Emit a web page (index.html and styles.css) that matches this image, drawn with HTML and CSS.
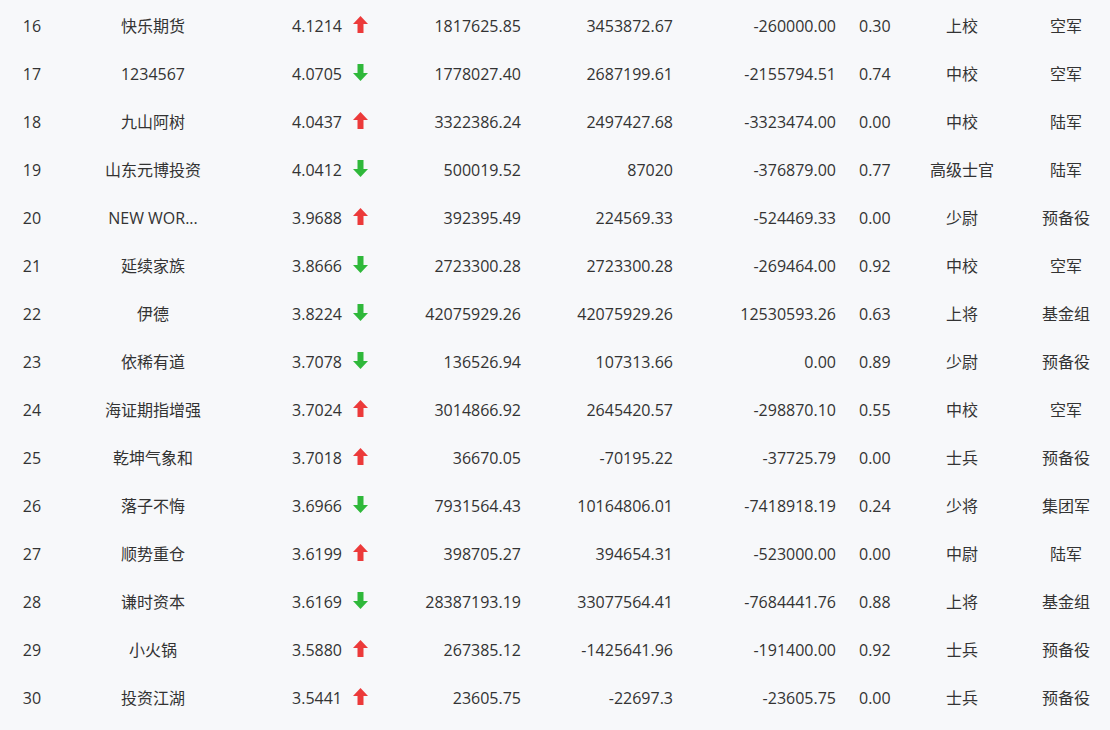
FILE: index.html
```html
<!DOCTYPE html>
<html lang="zh">
<head>
<meta charset="utf-8">
<title>排行</title>
<link rel="stylesheet" href="styles.css">
</head>
<body>
<div class="table">
  <div class="row"><span class="c rank">16</span><span class="c name">快乐期货</span><span class="c score">4.1214<svg class="arr up" viewBox="0 0 15 17"><polygon points="7.5,0 15,8 10.5,8 10.5,17 4.5,17 4.5,8 0,8"/></svg></span><span class="c n4">1817625.85</span><span class="c n5">3453872.67</span><span class="c n6">-260000.00</span><span class="c n7">0.30</span><span class="c rankt">上校</span><span class="c army">空军</span></div>
  <div class="row"><span class="c rank">17</span><span class="c name">1234567</span><span class="c score">4.0705<svg class="arr down" viewBox="0 0 15 17"><polygon points="7.5,17 15,9 10.5,9 10.5,0 4.5,0 4.5,9 0,9"/></svg></span><span class="c n4">1778027.40</span><span class="c n5">2687199.61</span><span class="c n6">-2155794.51</span><span class="c n7">0.74</span><span class="c rankt">中校</span><span class="c army">空军</span></div>
  <div class="row"><span class="c rank">18</span><span class="c name">九山阿树</span><span class="c score">4.0437<svg class="arr up" viewBox="0 0 15 17"><polygon points="7.5,0 15,8 10.5,8 10.5,17 4.5,17 4.5,8 0,8"/></svg></span><span class="c n4">3322386.24</span><span class="c n5">2497427.68</span><span class="c n6">-3323474.00</span><span class="c n7">0.00</span><span class="c rankt">中校</span><span class="c army">陆军</span></div>
  <div class="row"><span class="c rank">19</span><span class="c name">山东元博投资</span><span class="c score">4.0412<svg class="arr down" viewBox="0 0 15 17"><polygon points="7.5,17 15,9 10.5,9 10.5,0 4.5,0 4.5,9 0,9"/></svg></span><span class="c n4">500019.52</span><span class="c n5">87020</span><span class="c n6">-376879.00</span><span class="c n7">0.77</span><span class="c rankt">高级士官</span><span class="c army">陆军</span></div>
  <div class="row"><span class="c rank">20</span><span class="c name">NEW WOR...</span><span class="c score">3.9688<svg class="arr up" viewBox="0 0 15 17"><polygon points="7.5,0 15,8 10.5,8 10.5,17 4.5,17 4.5,8 0,8"/></svg></span><span class="c n4">392395.49</span><span class="c n5">224569.33</span><span class="c n6">-524469.33</span><span class="c n7">0.00</span><span class="c rankt">少尉</span><span class="c army">预备役</span></div>
  <div class="row"><span class="c rank">21</span><span class="c name">延续家族</span><span class="c score">3.8666<svg class="arr down" viewBox="0 0 15 17"><polygon points="7.5,17 15,9 10.5,9 10.5,0 4.5,0 4.5,9 0,9"/></svg></span><span class="c n4">2723300.28</span><span class="c n5">2723300.28</span><span class="c n6">-269464.00</span><span class="c n7">0.92</span><span class="c rankt">中校</span><span class="c army">空军</span></div>
  <div class="row"><span class="c rank">22</span><span class="c name">伊德</span><span class="c score">3.8224<svg class="arr down" viewBox="0 0 15 17"><polygon points="7.5,17 15,9 10.5,9 10.5,0 4.5,0 4.5,9 0,9"/></svg></span><span class="c n4">42075929.26</span><span class="c n5">42075929.26</span><span class="c n6">12530593.26</span><span class="c n7">0.63</span><span class="c rankt">上将</span><span class="c army">基金组</span></div>
  <div class="row"><span class="c rank">23</span><span class="c name">依稀有道</span><span class="c score">3.7078<svg class="arr down" viewBox="0 0 15 17"><polygon points="7.5,17 15,9 10.5,9 10.5,0 4.5,0 4.5,9 0,9"/></svg></span><span class="c n4">136526.94</span><span class="c n5">107313.66</span><span class="c n6">0.00</span><span class="c n7">0.89</span><span class="c rankt">少尉</span><span class="c army">预备役</span></div>
  <div class="row"><span class="c rank">24</span><span class="c name">海证期指增强</span><span class="c score">3.7024<svg class="arr up" viewBox="0 0 15 17"><polygon points="7.5,0 15,8 10.5,8 10.5,17 4.5,17 4.5,8 0,8"/></svg></span><span class="c n4">3014866.92</span><span class="c n5">2645420.57</span><span class="c n6">-298870.10</span><span class="c n7">0.55</span><span class="c rankt">中校</span><span class="c army">空军</span></div>
  <div class="row"><span class="c rank">25</span><span class="c name">乾坤气象和</span><span class="c score">3.7018<svg class="arr up" viewBox="0 0 15 17"><polygon points="7.5,0 15,8 10.5,8 10.5,17 4.5,17 4.5,8 0,8"/></svg></span><span class="c n4">36670.05</span><span class="c n5">-70195.22</span><span class="c n6">-37725.79</span><span class="c n7">0.00</span><span class="c rankt">士兵</span><span class="c army">预备役</span></div>
  <div class="row"><span class="c rank">26</span><span class="c name">落子不悔</span><span class="c score">3.6966<svg class="arr down" viewBox="0 0 15 17"><polygon points="7.5,17 15,9 10.5,9 10.5,0 4.5,0 4.5,9 0,9"/></svg></span><span class="c n4">7931564.43</span><span class="c n5">10164806.01</span><span class="c n6">-7418918.19</span><span class="c n7">0.24</span><span class="c rankt">少将</span><span class="c army">集团军</span></div>
  <div class="row"><span class="c rank">27</span><span class="c name">顺势重仓</span><span class="c score">3.6199<svg class="arr up" viewBox="0 0 15 17"><polygon points="7.5,0 15,8 10.5,8 10.5,17 4.5,17 4.5,8 0,8"/></svg></span><span class="c n4">398705.27</span><span class="c n5">394654.31</span><span class="c n6">-523000.00</span><span class="c n7">0.00</span><span class="c rankt">中尉</span><span class="c army">陆军</span></div>
  <div class="row"><span class="c rank">28</span><span class="c name">谦时资本</span><span class="c score">3.6169<svg class="arr down" viewBox="0 0 15 17"><polygon points="7.5,17 15,9 10.5,9 10.5,0 4.5,0 4.5,9 0,9"/></svg></span><span class="c n4">28387193.19</span><span class="c n5">33077564.41</span><span class="c n6">-7684441.76</span><span class="c n7">0.88</span><span class="c rankt">上将</span><span class="c army">基金组</span></div>
  <div class="row"><span class="c rank">29</span><span class="c name">小火锅</span><span class="c score">3.5880<svg class="arr up" viewBox="0 0 15 17"><polygon points="7.5,0 15,8 10.5,8 10.5,17 4.5,17 4.5,8 0,8"/></svg></span><span class="c n4">267385.12</span><span class="c n5">-1425641.96</span><span class="c n6">-191400.00</span><span class="c n7">0.92</span><span class="c rankt">士兵</span><span class="c army">预备役</span></div>
  <div class="row"><span class="c rank">30</span><span class="c name">投资江湖</span><span class="c score">3.5441<svg class="arr up" viewBox="0 0 15 17"><polygon points="7.5,0 15,8 10.5,8 10.5,17 4.5,17 4.5,8 0,8"/></svg></span><span class="c n4">23605.75</span><span class="c n5">-22697.3</span><span class="c n6">-23605.75</span><span class="c n7">0.00</span><span class="c rankt">士兵</span><span class="c army">预备役</span></div>
</div>
</body>
</html>
```

FILE: styles.css
```css
html, body {
  margin: 0;
  padding: 0;
  background: #f7f8fa;
  overflow: hidden;
}
body {
  font-family: "Open Sans", "Noto Sans CJK SC", sans-serif;
  font-size: 16px;
  color: #333;
}
.table {
  padding-top: 2px;
  width: 1110px;
}
.row {
  display: grid;
  grid-template-columns: 64px 178px 138px 150px 150px 165px 65px 104px 96px;
  height: 48px;
  align-items: center;
}
.c {
  white-space: nowrap;
  line-height: 20px;
}
.rank { text-align: center; }
.name { text-align: center; }
.score {
  display: flex;
  justify-content: flex-end;
  align-items: center;
  padding-right: 12px;
}
.arr {
  width: 15px;
  height: 17px;
  margin-left: 11px;
  margin-top: -3px;
}
.arr.up { fill: #ec3a3a; }
.arr.down { fill: #2fb83a; }
.n4 { text-align: right; padding-right: 9px; }
.n5 { text-align: right; padding-right: 7px; }
.n6 { text-align: right; padding-right: 9px; }
.n7 { text-align: left; padding-left: 14px; }
.rankt { text-align: center; }
.army { text-align: center; padding-left: 8px; }
```
